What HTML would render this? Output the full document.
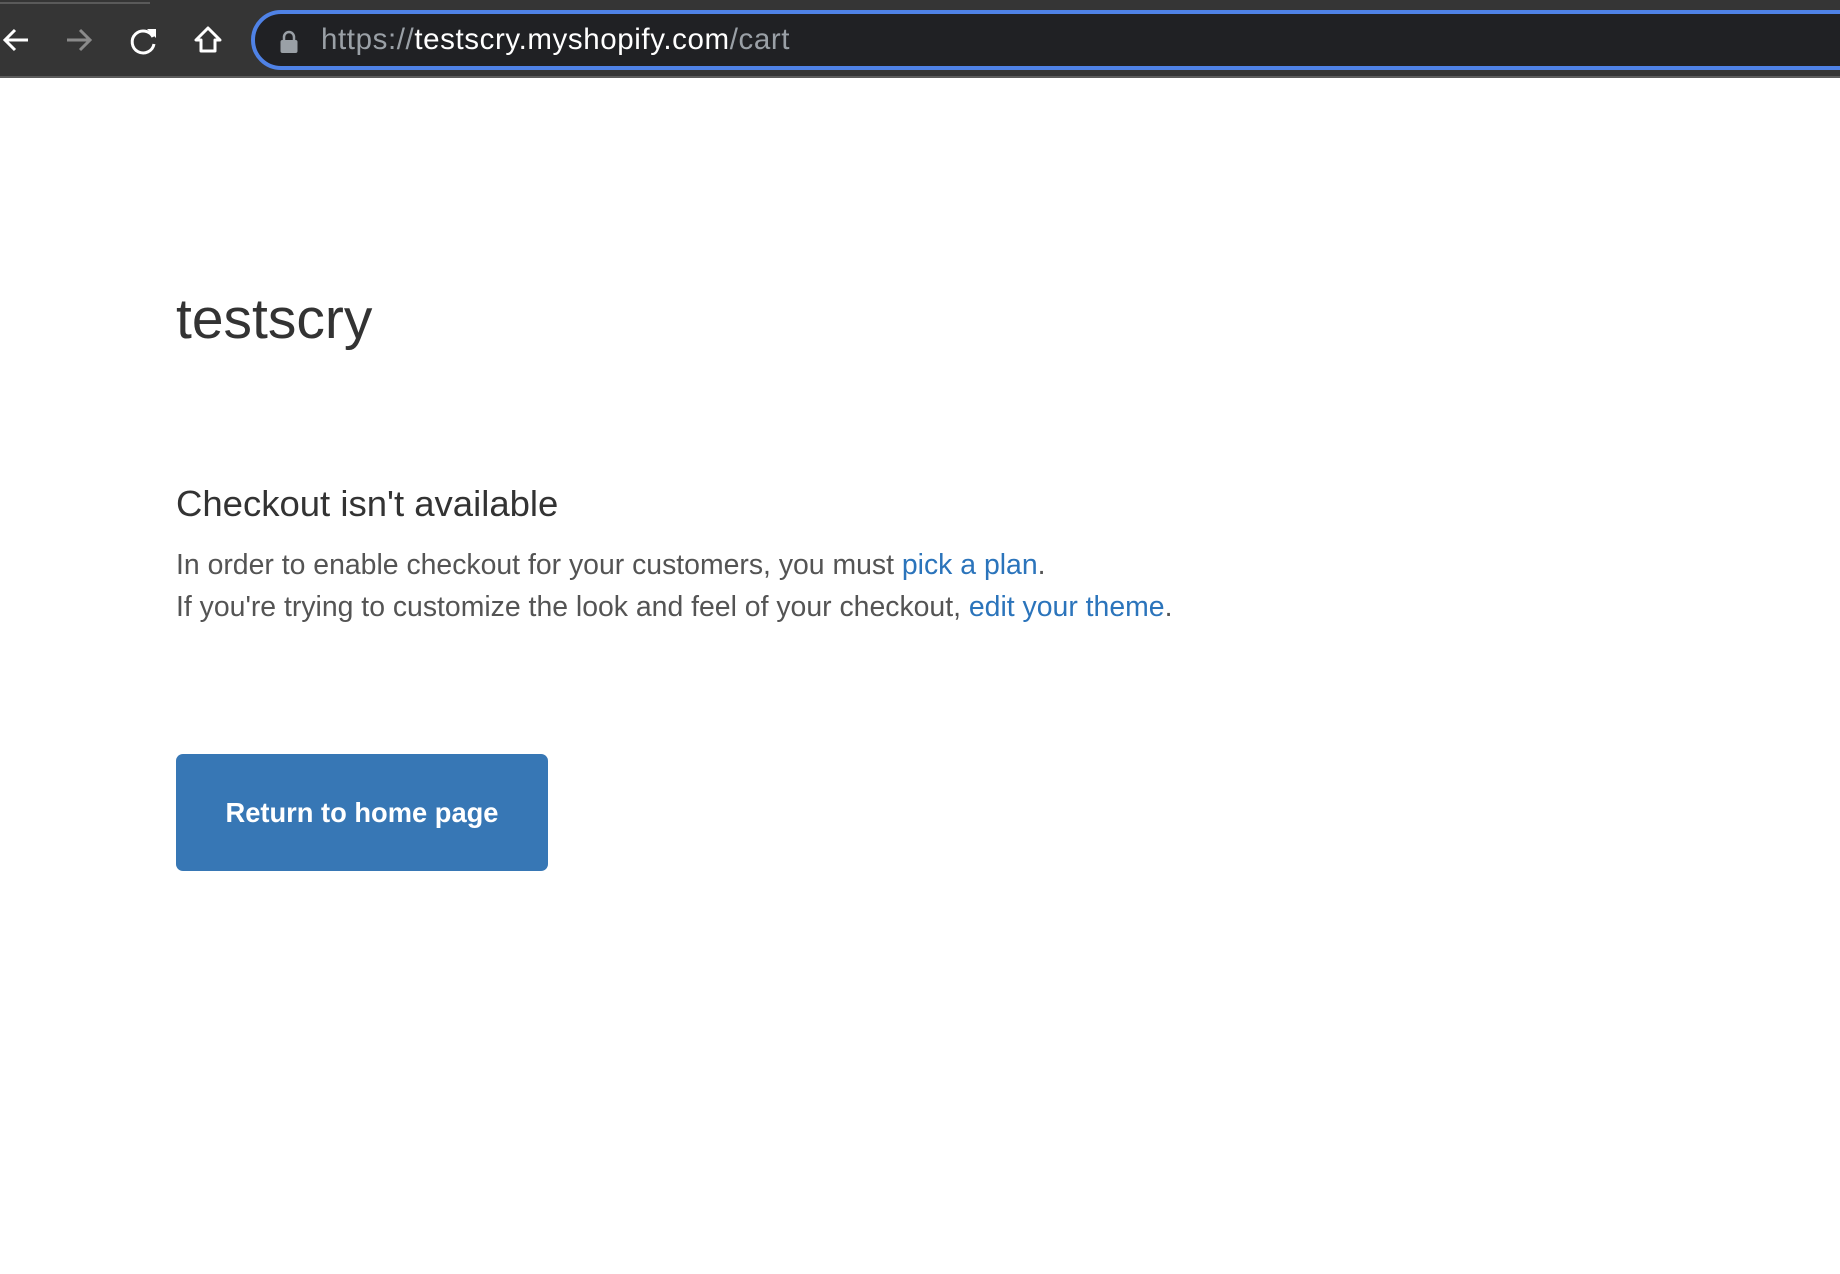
<!DOCTYPE html>
<html><head><meta charset="utf-8"><style>
html,body{margin:0;padding:0;width:1840px;height:1274px;background:#fff;overflow:hidden;font-family:"Liberation Sans",Arial,sans-serif}
.bar{position:absolute;left:0;top:0;width:1840px;height:78px;background:#353535}
.bar .tl{position:absolute;left:0;top:2px;width:150px;height:2px;background:#5a5a5a}
.bar .bl{position:absolute;left:0;top:76px;width:1840px;height:2px;background:#5c5c5c}
.url{position:absolute;left:251px;top:10px;width:1640px;height:52px;border:4px solid #4f82e6;border-radius:32px;background:#202124}
.url .t{position:absolute;left:66px;top:9px;font-size:29.5px;color:#9aa0a6;white-space:nowrap;letter-spacing:0.6px}
.url .t b{font-weight:normal;color:#fff}
svg{position:absolute}
.h1{position:absolute;left:176px;top:284px;font-size:57px;color:#333;line-height:70px}
.h2{position:absolute;left:176px;top:481px;font-size:36.5px;color:#333;line-height:45px}
.p{position:absolute;left:176px;top:544px;font-size:28.4px;color:#545454;line-height:42px}
.p a{color:#2b74bb;text-decoration:none}
.btn{position:absolute;left:176px;top:754px;width:372px;height:117px;background:#3777b5;border-radius:7px;color:#fff;font-weight:bold;font-size:27.3px;line-height:117px;text-align:center}
</style></head><body>
<div class="bar"><div class="tl"></div><div class="bl"></div>
<svg style="left:0;top:24px" width="32" height="32" viewBox="0 0 32 32"><path d="M28 16H5M15 6L5 16l10 10" stroke="#fff" stroke-width="3" fill="none"/></svg>
<svg style="left:64px;top:24px" width="32" height="32" viewBox="0 0 32 32"><path d="M3 16h23M16 6l10 10-10 10" stroke="#8a8a8a" stroke-width="3" fill="none"/></svg>
<svg style="left:128px;top:24px" width="32" height="32" viewBox="0 0 32 32"><path d="M25 13A11 11 0 1 0 26 20" stroke="#fff" stroke-width="3" fill="none"/><path d="M19 5h9v9z" fill="#fff"/></svg>
<svg style="left:192px;top:24px" width="32" height="32" viewBox="0 0 32 32"><path d="M16 4L4 16h5v11h14V16h5z" stroke="#fff" stroke-width="3" fill="none" stroke-linejoin="round"/></svg>
<div class="url">
<svg style="left:24px;top:16px" width="20" height="24" viewBox="0 0 20 24"><path d="M5 11V7a5 5 0 0 1 10 0v4" stroke="#9aa0a6" stroke-width="2.5" fill="none"/><rect x="1.5" y="10" width="17" height="13" rx="2" fill="#9aa0a6"/></svg>
<div class="t">https://<b>testscry.myshopify.com</b>/cart</div></div>
</div>
<div class="h1">testscry</div>
<div class="h2">Checkout isn't available</div>
<div class="p">In order to enable checkout for your customers, you must <a>pick a plan</a>.<br>If you're trying to customize the look and feel of your checkout, <a>edit your theme</a>.</div>
<div class="btn">Return to home page</div>
</body></html>
